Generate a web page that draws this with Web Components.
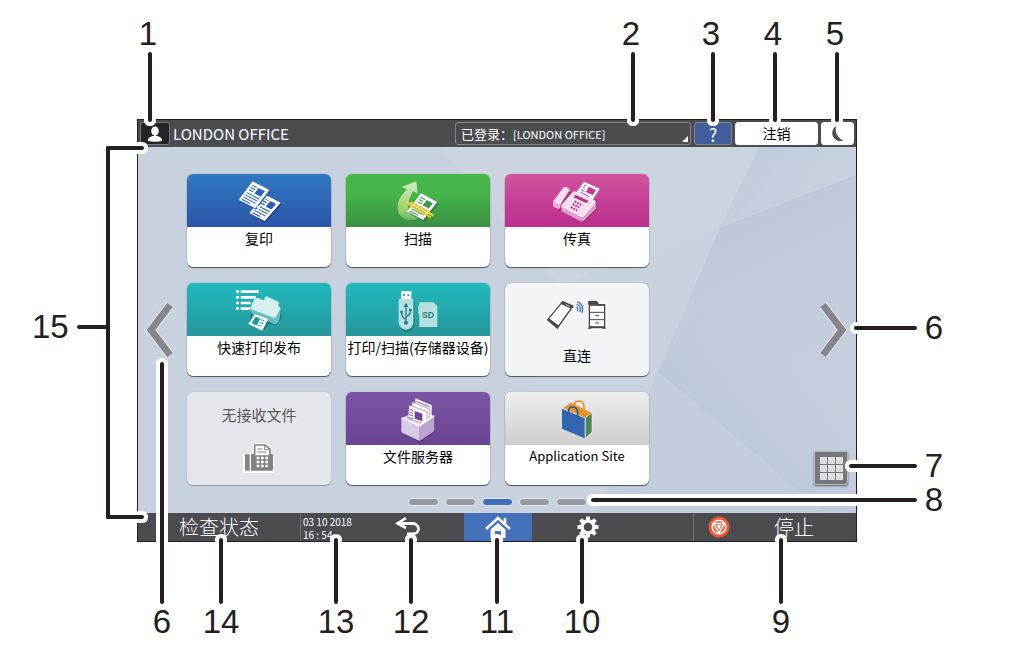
<!DOCTYPE html>
<html lang="zh-CN">
<head>
<meta charset="utf-8">
<meta name="viewport" content="width=device-width, initial-scale=1">
<title>主页画面</title>
<style>
  body { margin: 0; background: #fff; color: #231f20; font-family: "Noto Sans CJK SC", "Noto Sans", sans-serif; }
</style>
</head>
<body>
<home-figure></home-figure>

<script>
const define = (name, html) => {
  const template = document.createElement('template');
  template.innerHTML = html;
  customElements.define(name, class extends HTMLElement {
    constructor() {
      super();
      this.attachShadow({ mode: 'open' }).append(template.content.cloneNode(true));
    }
  });
};

/* A sheet of paper, 40 by 50 units, placed with a matrix. */
const sheet = (matrix, ink, paper = '#fff') => `
  <g transform="matrix(${matrix})">
    <rect width="40" height="50" fill="${paper}"/>
    <rect x="19" y="7" width="15" height="15" fill="${ink}"/>
    <path d="M5 8h10M5 14h10M5 20h10M5 28h29M5 34h29M5 40h29M5 46h20" stroke="${ink}" stroke-width="2.4"/>
  </g>`;

/* Numbered callout: a label and a leader line that ends on the panel. */
define('call-out', `
  <style>
    :host { position: absolute; display: flex; align-items: center; pointer-events: none;
      font: 33px/36px "Liberation Sans", Arial, sans-serif; color: #231f20; }
    .line { flex: 1; border-radius: 2px; background: #231f20; box-shadow: 0 0 0 4px #fff; }
    :host([side="top"]), :host([side="bottom"]) { width: 40px; margin-left: -20px; }
    :host([side="top"]) { flex-direction: column; }
    :host([side="top"]) span { margin-right: 4px; }
    :host([side="bottom"]) { flex-direction: column-reverse; }
    :host([side="top"]) .line, :host([side="bottom"]) .line { width: 4px; }
    :host([side="right"]) { flex-direction: row-reverse; gap: 8px; height: 36px; }
    :host([side="left"]) { gap: 8px; height: 36px; }
    :host([side="right"]) .line, :host([side="left"]) .line { height: 4px; }
    :host([side="left"]) .line { box-shadow: none; }
  </style>
  <span><slot></slot></span><div class="line"></div>`);

/* Bracket that spans the whole home screen. */
define('span-bracket', `
  <style>
    :host { position: absolute; display: block; pointer-events: none; }
    div { position: absolute; background: #231f20; border-radius: 2px; }
    .a, .b { left: 0; right: 0; height: 4px; box-shadow: 0 0 0 4px #fff; }
    .a { top: 0; } .b { bottom: 0; }
    .v { left: 0; top: 0; bottom: 0; width: 4px; }
  </style>
  <div class="a"></div><div class="b"></div><div class="v"></div>`);

define('app-tile', `
  <style>
    :host { display: block; }
    button { display: flex; flex-direction: column; width: 100%; height: 93px; padding: 0; border: 0; border-radius: 6px;
      overflow: hidden; background: #fff; color: #000; cursor: pointer; box-shadow: 0 0 1px #5a616b, 0 1px 1px #4f555e;
      font: 14px/22px "Noto Sans CJK SC", sans-serif; white-space: nowrap; }
    .head { height: 53px; width: 100%; background: var(--head, none); }
    .text { width: 100%; display: flex; justify-content: center; }
    ::slotted(svg) { display: block; width: 100%; height: 100%; }
    :host([latin]) button { font-size: 13px; }
    :host([plain]) button { background: #f2f4f8; }
    :host([plain]) .head { height: 61px; }
    :host([idle]) button { flex-direction: column-reverse; justify-content: flex-end; background: #e3e6eb; color: #58595b; font-size: 15px; padding-top: 12px; box-shadow: 0 0 1px #a9b0ba, 0 1px 1px #8b929c; }
    :host([idle]) .head { height: 57px; }
  </style>
  <button type="button"><span class="head"><slot name="icon"></slot></span><span class="text"><slot></slot></span></button>`);

define('top-bar', `
  <style>
    :host { display: flex; align-items: center; gap: 3px; height: 27px; padding: 0 2px; background: #4b4c50; color: #fff; }
    button { box-sizing: border-box; height: 23px; padding: 0; border: 1px solid #85868a; border-radius: 3px; display: flex;
      align-items: center; justify-content: center; color: inherit; background: #4b4c50; font: 14px/18px "Noto Sans CJK SC", sans-serif; }
    .user { width: 30px; background: #252527; border-color: #77787c; }
    h1 { margin: 0; flex: 1; font: 15px/18px "Noto Sans CJK SC", sans-serif; }
    .login { width: 236px; justify-content: flex-start; padding-left: 5px; font-size: 13px; position: relative; }
    .login small { font-size: 11px; }
    .login::after { content: ""; position: absolute; right: 2px; bottom: 2px; border: 3px solid #fff; border-top-color: transparent; border-left-color: transparent; }
    .help { width: 38px; background: #405e9c; font-size: 18px; }
    .out { width: 83px; padding-bottom: 2px; background: #fff; color: #000; border-color: #fff; }
    .sleep { width: 33px; background: #fff; border-color: #fff; }
  </style>
  <button class="user" type="button" aria-label="用户"><svg width="16" height="18" viewBox="0 0 16 18" fill="#fff"><ellipse cx="8" cy="6" rx="3.8" ry="4.6"/><path d="M7 9h2v3H7zM1 16c0-3.500 2-4.200 5-5h4c3 .8 5 1.500 5 5q-7 1.500-14 0"/></svg></button>
  <h1>LONDON OFFICE</h1>
  <button class="login" type="button">已登录：<small>[LONDON OFFICE]</small></button>
  <button class="help" type="button">?</button>
  <button class="out" type="button">注销</button>
  <button class="sleep" type="button" aria-label="休眠"><svg width="14" height="18" viewBox="0 0 14 18"><path d="M5 1C1 4 0 9 3 13c2.500 3 6.500 3.800 9 2.500C7 13 3.500 7.500 5 1" fill="#4b4c50"/></svg></button>`);

define('bottom-bar', `
  <style>
    :host { display: grid; grid-template-columns: 162px 1fr 162px; height: 28px; background: #4b4c50; color: #fff; }
    button { box-sizing: border-box; border: 0; padding: 0; background: none; color: inherit; display: flex; align-items: center; justify-content: center;
      font: 300 20px/28px "Noto Sans CJK SC", sans-serif; }
    .middle { display: grid; grid-template-columns: 1fr auto 1fr; border: solid #6f7074; border-width: 0 1px; }
    time { font: 10px/13px "Noto Sans CJK SC", sans-serif; padding: 2px 0 0 2px; white-space: nowrap; }
    nav { display: flex; }
    nav button { width: 112px; }
    nav .home { width: 68px; background: #4472ba; }
    .stop { justify-content: flex-start; padding-left: 14px; gap: 44px; }
  </style>
  <button type="button">检查状态</button>
  <div class="middle">
    <time datetime="2018-10-03T16:54">03 10 2018<br>16 : 54</time>
    <nav>
      <button type="button" aria-label="返回"><svg width="28" height="22" viewBox="0 0 28 22" fill="none" stroke="#fff"><path d="M5 7.500h13.500c8 0 8 10.500 0 10.500H13" stroke-width="2.800"/><path d="M12 2 3.500 7.500 12 12" stroke-width="2.600"/></svg></button>
      <button class="home" type="button" aria-label="主页"><svg width="28" height="24" viewBox="0 0 28 24"><path d="M2 14 14 3l12 11M21 3v6" fill="none" stroke="#fff" stroke-width="2.600"/><path d="M6.500 14.500 14 8l7.500 6.500V23H17v-7h-6v7H6.500z" fill="#fff"/></svg></button>
      <button type="button" aria-label="设置"><svg width="22" height="22" viewBox="-11 -11 22 22"><circle r="6" fill="none" stroke="#fff" stroke-width="3.400"/><path d="M0-10.500V-7M0 10.500V7M-10.500 0H-7M10.500 0H7M-7.400-7.400-5-5M7.400 7.400 5 5M-7.400 7.400-5 5M7.400-7.400 5-5" stroke="#fff" stroke-width="4"/></svg></button>
    </nav>
  </div>
  <button class="stop" type="button"><svg width="22" height="22" viewBox="-11 -11 22 22"><circle r="10.500" fill="#f05a35"/><g fill="none" stroke="#fff" stroke-width="1.500"><circle r="6.800"/><path d="M-5.500-3.500h11L0 6z"/></g><path d="M-2.500-2h5L0 2.500z" fill="#fff"/></svg>停止</button>`);

define('home-screen', `
  <style>
    :host { position: relative; display: grid; grid-template-columns: 49px auto 1fr 44px; grid-template-rows: auto auto; background: #c9d2de; padding-top: 27px; }
    .backdrop { position: absolute; top: 0; left: 0; width: 100%; height: 100%; }
    .tiles { position: relative; display: grid; grid-template-columns: repeat(3, 144px); gap: 16px 15px; }
    .arrow { position: relative; border: 0; padding: 0; background: none; display: flex; align-items: center; justify-content: center; }
    .left { padding-right: 7px; }
    .side { position: relative; grid-column: 4; display: grid; grid-template-rows: 1fr auto 1fr; justify-items: end; padding-right: 8px; }
    .side .apps { grid-row: 3; align-self: end; display: grid; grid-template-columns: repeat(3, 7px); gap: 1px; justify-content: center; align-content: center;
      width: 34px; height: 34px; box-sizing: border-box; padding: 0; border: 1px solid #b9bcc2; border-radius: 2px; background: #76777d; box-shadow: 0 1px 2px #555b66; }
    .apps i { height: 7px; background: #dcdddf; }
    .side .arrow { grid-row: 2; }
    .dots { position: relative; grid-column: 1 / -1; display: flex; justify-content: center; gap: 6px; padding: 13px 0 7px; }
    .dots button { box-sizing: border-box; width: 31px; height: 8px; padding: 0; border: 1px solid #e4e8ee; border-radius: 4px; background: #96999f; }
    .dots button[aria-current] { background: #3d70bb; }
  </style>
  <svg class="backdrop" viewBox="138 147 718 367" preserveAspectRatio="none" aria-hidden="true">
    <defs>
      <linearGradient id="a" x1="0" y1="0" x2="1" y2=".5"><stop stop-color="#bdc8da"/><stop offset=".5" stop-color="#c5cfdd"/><stop offset="1" stop-color="#c9d2de"/></linearGradient>
      <linearGradient id="b" x1="0" y1="0" x2=".3" y2="1"><stop stop-color="#b9c4d8"/><stop offset=".5" stop-color="#c3ccdb"/><stop offset="1" stop-color="#c6cfdc"/></linearGradient>
      <linearGradient id="c" gradientUnits="userSpaceOnUse" x1="741" y1="443" x2="800" y2="373"><stop stop-color="#b9c5d9"/><stop offset="1" stop-color="#b9c5d9" stop-opacity="0"/></linearGradient>
    </defs>
    <path d="M138 147h360L656 262 400 514H138z" fill="#c8d1de"/>
    <path d="M440 147h319L720 228 560 285z" fill="#cbd4df"/>
    <path d="M759 147h97v28L720 228z" fill="url(#a)"/>
    <path d="M856 175v339H825L658 372 720 228z" fill="url(#b)"/>
    <path d="M658 372 825 514h31V300L720 270z" fill="url(#c)" opacity=".6"/>
    <path d="M658 372 825 514H598z" fill="#c3cddc"/>
  </svg>
  <button class="arrow left" type="button" aria-label="上一页"><svg width="30" height="58" viewBox="0 0 30 58" fill="none"><path d="M26 4 7 29l19 25" stroke="#e3e5e9" stroke-width="9"/><path d="M26 4 7 29l19 25" stroke="#84868b" stroke-width="7"/></svg></button>
  <div class="tiles">
    <app-tile style="--head:linear-gradient(#3179c2,#2b55a8)"><svg slot="icon" viewBox="21 28 432 159">
      <g transform="translate(4 5)" opacity=".25"><path d="M218 50 270 77 227 132 176 105zM256 90 303 113 250 170 203 140z"/></g>
      ${sheet('1.150 .6 -.960 1.1 256 90', '#2c5db0')}
      <path d="M218 50 272 78 228 135 176 106z" fill="#2e65b6"/>
      ${sheet('1.250 .650 -.840 1.1 218 50', '#2c65b8')}
      <path d="M254 103 264 94 266 105zM230 126 242 120 235 137z" fill="#fff"/></svg>复印</app-tile>
    <app-tile style="--head:linear-gradient(#45b84b,#45b549 38%,#3b8f43)"><svg slot="icon" viewBox="497 28 432 159">
      <defs><linearGradient id="g" x1="0" y1="1" x2="0" y2="0"><stop stop-color="#70b970"/><stop offset=".3" stop-color="#9ed36b"/><stop offset="1" stop-color="#d3ebc8"/></linearGradient></defs>
      <path d="M708 50 665 66 680 75C648 100 640 148 674 162 690 169 704 166 716 158 688 160 668 132 698 80L712 87z" fill="url(#g)"/>
      <path d="M728 90 777 115 732 172 684 143z" opacity=".22"/>
      ${sheet('1.220 .650 -.840 1.080 722 86', '#40984a')}
      <path d="M682 118 752 158M691 112 759 151" stroke="#edc51d" stroke-width="6"/><path d="M681 112 758 154" stroke="#fff3a0" stroke-width="3"/></svg>扫描</app-tile>
    <app-tile style="--head:linear-gradient(#d2549f,#bb2e8d)"><svg slot="icon" viewBox="29 28 432 159">
      <path d="M215 80 304 105 304 136 266 172 190 136z" opacity=".2"/>
      <path d="M266 51 313 72 290 109 244 82z" fill="#fff"/><path d="M280 66 302 76 292 92 272 82z" fill="#c33b94"/><path d="M266 61 273 64M262 68 269 71M257 75 268 80M255 82 281 96" stroke="#c33b94" stroke-width="3"/>
      <path d="M203 70q6-5 15-1 8 4 3 10l-28 44v8q-10 3-19-6v-16z" fill="#f8dced"/><path d="M174 109q9 12 21 8v14q-12 2-21-7z" fill="#e8a9d1"/>
      <path d="M232 82q5-4 11-1l56 26q5 4 1 11l-34 39q-4 4-10 1l-57-29q-4-3-1-8z" fill="#f9e0ef"/>
      <path d="M198 125q2 5 58 33 6 3 11-2l35-42v18l-35 35q-6 5-12 2l-57-29z" fill="#dca0c9"/>
      <path d="M240 90 279 108 274 116 235 98z" fill="#b82e8b"/>
      <path d="m238 110 20 11M232 118l20 11M226 127l20 11" stroke="#bd3990" stroke-width="6" stroke-dasharray="6 3"/></svg>传真</app-tile>
    <app-tile style="--head:linear-gradient(#20babd,#26979b)"><svg slot="icon" viewBox="21 24 432 159">
      <path d="M168 50h9M182 50h55M168 67h9M182 67h45M168 84h9M182 84h30M168 101h9M182 101h30" stroke="#fff" stroke-width="8"/>
      <path d="M218 78 305 104V130l-13 20-25-3-15 20-44-20z" opacity=".2"/>
      <path d="M258 63 298 82 292 99 248 81z" fill="#d4eeee"/>
      <path d="M211 94 218 80q4-7 13-6l60 19q14 5 11 15l-4 28q-5 14-17 10L216 116q-8-7-5-22z" fill="#68bfc0"/>
      <path d="M213 96 222 75q3-7 11-6l58 22q13 5 8 13l-10 19q-4 7-12 4l-60-23q-7-3-4-8z" fill="#d6f0f0"/>
      <path d="M224 117 264 132 247 167 205 147z" fill="#fff"/><path d="M227 126 239 131 230 150 217 144zM243 134l10 4M239 142l10 4M234 150l10 4" fill="#209b9f" stroke="#209b9f" stroke-width="3"/></svg>快速打印发布</app-tile>
    <app-tile style="--head:linear-gradient(#20babd,#26979b)"><svg slot="icon" viewBox="497 24 432 159">
      <path d="M659 76h44v76q-8 22-30 20l-14-13z" opacity=".16"/>
      <path d="M662 48h31v27h-31z" fill="#fff"/><path d="M668 58h6v6h-6zM681 58h6v6h-6z" fill="#209da0"/>
      <path d="M655 72h44v70a22 22 0 0 1-44 0z" fill="#b5e0df"/>
      <g fill="none" stroke="#237f85" stroke-width="4"><path d="M677 140V91M677 134c-10-8-13-8-13-23M677 127c10-8 13-8 13-21"/><path d="m673 94 4-7 4 7z" fill="#237f85"/></g><circle cx="677" cy="143" r="6" fill="#237f85"/><path d="M660 107h8v8h-8zM686 101h8v8h-8z" fill="#237f85"/>
      <path d="M718 82h42l11 12v62h-54v-35l-3-4V96z" fill="#b5e0df"/><text x="743" y="128" text-anchor="middle" font-family="Liberation Sans, Arial, sans-serif" font-size="26" font-weight="700" fill="#287f87">SD</text></svg>打印/扫描(存储器设备)</app-tile>
    <app-tile plain><svg slot="icon" viewBox="29 24 432 183">
      <g stroke-linejoin="round"><path d="M202 80 233 94 186 160 157 134z" fill="#fff" stroke="#fff" stroke-width="11"/><path d="M202 80 233 93 186 159 157 134z" fill="#fff" stroke="#48494c" stroke-width="4"/><path d="M202 79 234 93 228 101 196 87zM159 128 192 153 186 161 156 136z" fill="#48494c"/><path d="m211 88 12 6" stroke="#fff" stroke-width="2"/></g>
      <path d="M242 96q8 3 4 13M244 87q15 7 10 24M246 80q22 10 14 34" fill="none" stroke="#3e74bf" stroke-width="4"/>
      <path d="M278 79h30v7h24v76h-54z" fill="#fff" stroke="#fff" stroke-width="7"/><path d="M282 81h22l4 8h20v69h-46z" fill="#fff" stroke="#48494c" stroke-width="4"/><path d="M280 79h24l5 9h-29zM282 91h46M282 112h46M282 134h46M282 155h46M300 122h11M300 144h11M278 160h10M321 160h10" fill="#48494c" stroke="#48494c" stroke-width="3"/></svg>直连</app-tile>
    <app-tile idle><svg slot="icon" viewBox="21 128 432 171">
      <path d="M192 214h18v-3h10v-29h40l13 15v14h7v55h-88z" fill="#fff" stroke="#fff" stroke-width="4"/>
      <path d="M195 213h14v49h-11q-3 0-3-4zM213 212h66v46q0 4-4 4h-62z" fill="#808286"/>
      <path d="M224 216v-31h32l14 13v18" fill="#fff" stroke="#808286" stroke-width="5"/><path d="M232 197h16M232 206h28M254 185v14h15" stroke="#808286" stroke-width="3" fill="none"/>
      <path d="M230 224h34M230 236h34M230 248h34" stroke="#fff" stroke-width="7" stroke-dasharray="8 5"/></svg>无接收文件</app-tile>
    <app-tile style="--head:linear-gradient(#7e55a6,#684492)"><svg slot="icon" viewBox="497 20 432 159">
      <path d="M669 100 727 60 766 94 764 140 718 173 667 143z" opacity=".16"/>
      <path d="M663 98 716 76 762 92 718 124z" fill="#eadff1"/>
      <path d="M705 39 754 60V108L705 90z" fill="#fff"/><path d="M708 48 748 65" stroke="#7b559f" stroke-width="3"/>
      <path d="M695 49 747 71V114L695 95z" fill="#fff" stroke="#9270b1" stroke-width="2"/><path d="M687 59 740 79V118L682 100z" fill="#fff" stroke="#9270b1" stroke-width="2"/>
      <path d="M703 77 726 85V108L703 100z" fill="#6e4797"/><path d="M688 72 698 76M688 80 698 84M687 88 698 92M684 96 698 101" stroke="#7b559f" stroke-width="3"/>
      <path d="M663 98 718 121V167L667 143q-4-2-4-7z" fill="#d9cae6"/><path d="M718 121 762 91V132q0 5-4 8L718 167z" fill="#bba3d0"/><path d="M663 98 718 121 762 91" fill="none" stroke="#fff" stroke-width="4"/></svg>文件服务器</app-tile>
    <app-tile latin style="--head:linear-gradient(#eeeeef,#cececf)"><svg slot="icon" viewBox="29 20 432 159">
      <path d="M204 67 227 52 290 83 270 98z" fill="#e89327"/><path d="M238 71V57q0-10 14-10 13 1 14 15v20" fill="none" stroke="#e89327" stroke-width="5"/>
      <path d="M270 97 290 82V140L270 159z" fill="#4b8551" stroke="#eee" stroke-width="2"/>
      <path d="M200 70 268 99V159L200 130z" fill="#3266b1"/><path d="M220 80V73q2-9 13-8 13 1 14 16v14" fill="none" stroke="#285a9e" stroke-width="5"/></svg>Application Site</app-tile>
  </div>
  <div class="side">
    <button class="arrow" type="button" aria-label="下一页"><svg width="30" height="58" viewBox="0 0 30 58" fill="none"><path d="m5 4 19 25L5 54" stroke="#e3e5e9" stroke-width="9"/><path d="m5 4 19 25L5 54" stroke="#84868b" stroke-width="7"/></svg></button>
    <button class="apps" type="button" aria-label="应用程序列表"><i></i><i></i><i></i><i></i><i></i><i></i><i></i><i></i><i></i></button>
  </div>
  <div class="dots"><button type="button" aria-label="1"></button><button type="button" aria-label="2"></button><button type="button" aria-label="3" aria-current="page"></button><button type="button" aria-label="4"></button><button type="button" aria-label="5"></button></div>`);

define('home-figure', `
  <style>
    :host { display: block; padding: 119px 165px 117px 137px; min-width: 640px; }
    .stage { position: relative; }
    .panel { border: 1px solid #231f20; }
  </style>
  <div class="stage">
    <div class="panel"><top-bar></top-bar><home-screen></home-screen><bottom-bar></bottom-bar></div>

    <span-bracket style="left:-31px; top:27px; width:38px; bottom:23px"></span-bracket>
    <call-out side="left" style="left:-105px; width:76px; top:190px">15</call-out>

    <call-out side="top" style="left:13px; top:-103px; height:106px">1</call-out>
    <call-out side="top" style="left:calc(100% - 224px); top:-103px; height:106px">2</call-out>
    <call-out side="top" style="left:calc(100% - 144px); top:-103px; height:106px">3</call-out>
    <call-out side="top" style="left:calc(100% - 82px); top:-103px; height:106px">4</call-out>
    <call-out side="top" style="left:calc(100% - 20px); top:-103px; height:106px">5</call-out>

    <call-out side="right" style="right:-86px; width:89px; top:191px">6</call-out>
    <call-out side="right" style="right:-86px; width:94px; top:329px">7</call-out>
    <call-out side="right" style="right:-86px; left:calc(50% + 94px); top:363px">8</call-out>

    <call-out side="bottom" style="left:25px; bottom:-98px; height:278px">6</call-out>
    <call-out side="bottom" style="left:84px; bottom:-98px; height:102px">14</call-out>
    <call-out side="bottom" style="left:calc(50% - 161px); bottom:-98px; height:102px">13</call-out>
    <call-out side="bottom" style="left:calc(50% - 86px); bottom:-98px; height:102px">12</call-out>
    <call-out side="bottom" style="left:50%; bottom:-98px; height:102px">11</call-out>
    <call-out side="bottom" style="left:calc(50% + 85px); bottom:-98px; height:102px">10</call-out>
    <call-out side="bottom" style="left:calc(100% - 76px); bottom:-98px; height:102px">9</call-out>
  </div>`);
</script>
</body>
</html>
